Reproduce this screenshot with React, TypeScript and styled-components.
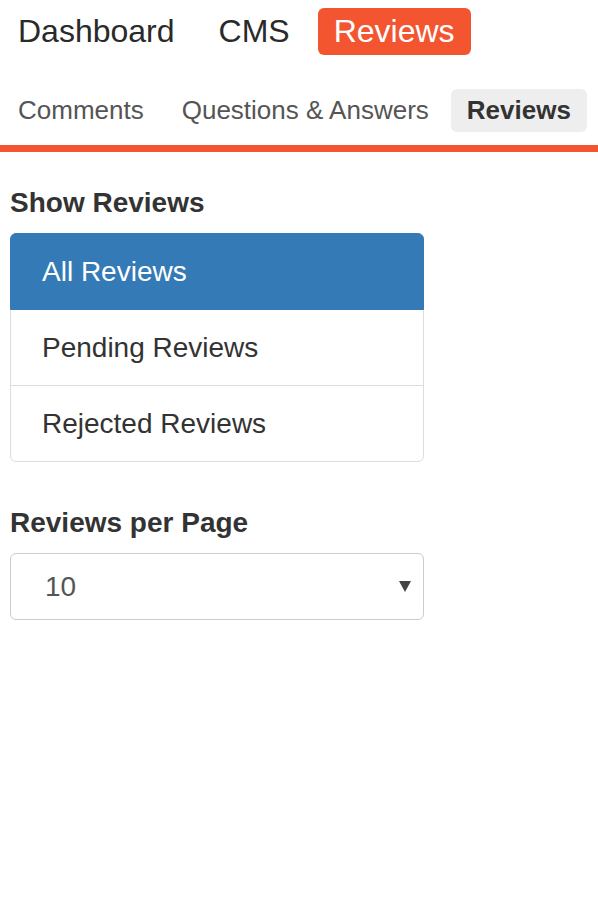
import styled, { createGlobalStyle, css } from "styled-components"
import type { FC } from "react"
import { useState } from "react"

const GlobalStyle = createGlobalStyle`
  html, body {
    margin: 0;
    padding: 0;
    background: #fff;
    font-family: "Liberation Sans", Arial, Helvetica, sans-serif;
    color: #333;
  }
  * {
    box-sizing: border-box;
  }
`

const ORANGE = "#f2552f"

const Page = styled.div`
  width: 598px;
  min-height: 897px;
`

const MainNav = styled.nav`
  display: flex;
  gap: 12px;
  padding: 8px 0 0 2px;
`

const MainLink = styled.a<{ $active?: boolean }>`
  display: block;
  padding: 5px 16px;
  font-size: 32px;
  line-height: 37px;
  color: #2a2a2a;
  text-decoration: none;
  border-radius: 6px;
  cursor: pointer;

  ${props =>
    props.$active &&
    css`
      background: ${ORANGE};
      color: #fff;
    `}
`

const SubNav = styled.nav`
  display: flex;
  gap: 6px;
  margin-top: 34px;
  padding-left: 2px;
  padding-bottom: 13px;
  border-bottom: 7px solid ${ORANGE};
`

const SubLink = styled.a<{ $active?: boolean }>`
  display: block;
  padding: 6px 16px;
  font-size: 26px;
  line-height: 31px;
  color: #555;
  text-decoration: none;
  border-radius: 6px;
  cursor: pointer;

  ${props =>
    props.$active &&
    css`
      background: #eee;
      color: #333;
      font-weight: 700;
    `}
`

const Sidebar = styled.div`
  display: flex;
  flex-direction: column;
  width: 414px;
  margin-left: 10px;
  padding-top: 35px;
`

const Heading = styled.h2`
  margin: 0 0 15px;
  font-size: 28px;
  line-height: 31px;
  font-weight: 700;
  color: #333;
`

const ListGroup = styled.div`
  display: flex;
  flex-direction: column;
  margin-bottom: 45px;
`

const ListItem = styled.a<{ $active?: boolean }>`
  position: relative;
  display: block;
  padding: 19px 31px;
  margin-bottom: -1px;
  font-size: 28px;
  line-height: 37px;
  color: #333;
  text-decoration: none;
  background: #fff;
  border: 1px solid #ddd;
  cursor: pointer;

  &:first-child {
    border-top-left-radius: 6px;
    border-top-right-radius: 6px;
  }

  &:last-child {
    margin-bottom: 0;
    border-bottom-left-radius: 6px;
    border-bottom-right-radius: 6px;
  }

  ${props =>
    props.$active &&
    css`
      z-index: 2;
      color: #fff;
      background: #337ab7;
      border-color: #337ab7;
    `}
`

const SelectWrap = styled.div`
  position: relative;
  width: 100%;
`

const Select = styled.select`
  display: block;
  width: 100%;
  height: 67px;
  padding: 0 34px;
  font-family: inherit;
  font-size: 28px;
  color: #555;
  background: #fff;
  border: 1px solid #ccc;
  border-radius: 6px;
  appearance: none;
  outline: none;
`

const Caret = styled.span`
  position: absolute;
  top: 28px;
  right: 13px;
  width: 0;
  height: 0;
  border-left: 6px solid transparent;
  border-right: 6px solid transparent;
  border-top: 11px solid #444;
  pointer-events: none;
`

const filters = ["All Reviews", "Pending Reviews", "Rejected Reviews"]

const App: FC = () => {
  const [filter, setFilter] = useState(filters[0])
  const [perPage, setPerPage] = useState("10")

  return (
    <Page>
      <GlobalStyle />
      <MainNav>
        <MainLink>Dashboard</MainLink>
        <MainLink>CMS</MainLink>
        <MainLink $active>Reviews</MainLink>
      </MainNav>

      <SubNav>
        <SubLink>Comments</SubLink>
        <SubLink>Questions &amp; Answers</SubLink>
        <SubLink $active>Reviews</SubLink>
      </SubNav>

      <Sidebar>
        <Heading>Show Reviews</Heading>
        <ListGroup>
          {filters.map(f => (
            <ListItem key={f} $active={f === filter} onClick={() => setFilter(f)}>
              {f}
            </ListItem>
          ))}
        </ListGroup>

        <Heading>Reviews per Page</Heading>
        <SelectWrap>
          <Select value={perPage} onChange={e => setPerPage(e.target.value)}>
            <option value="10">10</option>
            <option value="25">25</option>
            <option value="50">50</option>
            <option value="100">100</option>
          </Select>
          <Caret />
        </SelectWrap>
      </Sidebar>
    </Page>
  )
}

export default App
